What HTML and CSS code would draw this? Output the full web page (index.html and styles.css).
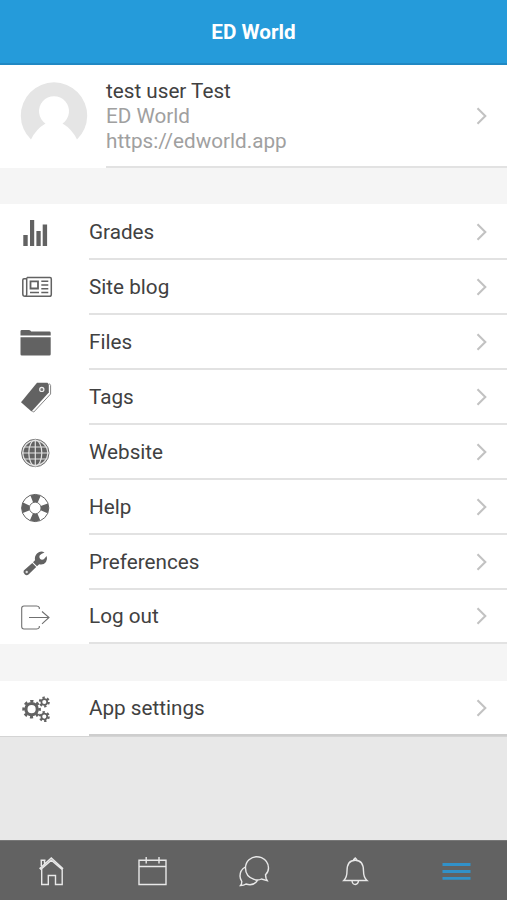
FILE: index.html
```html
<!DOCTYPE html>
<html lang="en">
<head>
<meta charset="utf-8">
<title>ED World</title>
<link rel="stylesheet" href="styles.css">
</head>
<body>
<svg class="defs" width="0" height="0" aria-hidden="true">
  <symbol id="chevron" viewBox="0 0 12 20"><path d="M1.500 2.300L9.300 10L1.500 17.700" fill="none" stroke="#c2c2c2" stroke-width="2.100"/></symbol>
</svg>
<div class="screen">
  <header class="header"><h1>ED World</h1></header>
  <main class="content">
    <section class="profile">
      <svg class="avatar" viewBox="0 0 106 103">
        <path d="M31 74.500A33.200 33.200 0 1 1 77 74.500Q72 64 62.500 58.500A15 15 0 1 0 45.500 58.500Q36 64 31 74.500Z" fill="#e5e5e5"/>
      </svg>
      <div class="profile-body">
        <div class="profile-text">
          <p class="name">test user Test</p>
          <p>ED World</p>
          <p>https://edworld.app</p>
        </div>
        <svg class="chevron"><use href="#chevron"/></svg>
      </div>
    </section>
    <nav class="list">
      <a class="row">
        <svg class="icon" viewBox="0 0 60 55"><path d="M23.300 30h4.400v11h-4.400zM30 15h4.200v26h-4.200zM36.400 26h4.300v15h-4.300zM42.700 19.500h4.400v21.500h-4.400z"/></svg>
        <div class="label"><span>Grades</span><svg class="chevron"><use href="#chevron"/></svg></div>
      </a>
      <a class="row">
        <svg class="icon" viewBox="0 0 60 55"><g fill="none" stroke="#626262" stroke-width="1.500"><path d="M27 17.500H50Q51.300 17.500 51.300 19V34.500Q51.300 36.300 49.500 36.300H25Q22.800 36.300 22.800 34V20Q22.800 18.800 24 18.800H26.500M26.700 17.500V34.500Q26.700 36 25 36.200"/><path d="M30.500 21.300h7.500v7.200h-7.500z" stroke-width="1.800"/><path d="M30 32.500h9M41.300 21.200h7M41.300 25h7M41.300 28.800h7M41.300 32.500h7"/></g></svg>
        <div class="label"><span>Site blog</span><svg class="chevron"><use href="#chevron"/></svg></div>
      </a>
      <a class="row">
        <svg class="icon" viewBox="0 0 60 55"><path d="M20.500 20.500V16.300Q20.500 15 21.800 15H29Q30.500 15 31.200 16.600H49.500Q50.700 16.600 50.700 17.800V20.500zM20.500 22.300H50.700V39.300Q50.700 40.500 49.500 40.500H21.800Q20.500 40.500 20.500 39.300z"/></svg>
        <div class="label"><span>Files</span><svg class="chevron"><use href="#chevron"/></svg></div>
      </a>
      <a class="row">
        <svg class="icon" viewBox="0 0 60 55"><path d="M37 12.800H47.500L48.800 14.500V22.500L31.500 41.500L21 32.300z"/><path d="M49.300 13.500L50.600 15.500V24L33.800 42L32.300 41.500" fill="none" stroke="#777" stroke-width=".9"/><circle cx="41.800" cy="19.400" r="2.100" fill="#777" stroke="#eee" stroke-width="1.200"/></svg>
        <div class="label"><span>Tags</span><svg class="chevron"><use href="#chevron"/></svg></div>
      </a>
      <a class="row">
        <svg class="icon" viewBox="0 0 60 55"><circle cx="35.300" cy="28" r="13.700" fill="#e2e2e2" stroke="#6a6a6a" stroke-width="1"/><circle cx="35.300" cy="28" r="11.800"/><g fill="none" stroke="#e2e2e2" stroke-width="1.200"><path d="M22 28h27M24 22h22.600M24 34h22.600M35.300 15v26"/><ellipse cx="35.300" cy="28" rx="6.500" ry="13"/></g></svg>
        <div class="label"><span>Website</span><svg class="chevron"><use href="#chevron"/></svg></div>
      </a>
      <a class="row">
        <svg class="icon" viewBox="0 0 60 55"><circle cx="35.200" cy="28" r="9.600" fill="none" stroke="#626262" stroke-width="7.500" stroke-dasharray="7.540 7.540" stroke-dashoffset="3.770"/><circle cx="35.200" cy="28" r="13.600" fill="none" stroke="#626262" stroke-width="1"/><circle cx="35.200" cy="28" r="5.800" fill="#fff" stroke="#626262" stroke-width=".9"/></svg>
        <div class="label"><span>Help</span><svg class="chevron"><use href="#chevron"/></svg></div>
      </a>
      <a class="row">
        <svg class="icon" viewBox="0 0 60 55"><path d="M23.800 35.500L32.300 28L36.200 32L28.500 39.500Q26.500 41 24.700 39.200Q22.700 37.300 23.800 35.500z"/><path d="M44.500 17.400Q40.500 15.300 37 18.400Q34.300 21 35 25.300L33 27.300L37 31.300L39.200 29.300Q43.500 30.300 46 27Q47.700 24.600 46.700 21L43.800 24.300Q41.500 25.300 40 23.700Q38.700 22 39.800 20.200Q41.500 18.500 44.500 17.400z"/><circle cx="26.700" cy="37" r="1.200" fill="#ddd"/></svg>
        <div class="label"><span>Preferences</span><svg class="chevron"><use href="#chevron"/></svg></div>
      </a>
      <a class="row last">
        <svg class="icon" viewBox="0 0 60 55"><g fill="none" stroke="#707070" stroke-width="1.100"><path d="M39.300 19V17.500Q38.500 16 36.500 16H24Q21.700 16 21.700 18.300V36.500Q21.700 39 24 39H36.500Q38.500 39 39.300 37.500V36M29 27.500H49M42 21.500L49 27.500L42 33.800"/></g></svg>
        <div class="label"><span>Log out</span><svg class="chevron"><use href="#chevron"/></svg></div>
      </a>
    </nav>
    <nav class="list settings">
      <a class="row">
        <svg class="icon" viewBox="0 0 60 55"><g fill="none" stroke="#626262"><circle cx="31.600" cy="27.200" r="5.700" stroke-width="3.200"/><circle cx="31.600" cy="27.200" r="8" stroke-width="2.600" stroke-dasharray="3.140 3.140" stroke-dashoffset="1.570"/><circle cx="44.300" cy="20" r="2.900" stroke-width="1.700"/><circle cx="44.300" cy="20" r="4.400" stroke-width="2.200" stroke-dasharray="2.300 2.300"/><circle cx="44.300" cy="34.600" r="2.900" stroke-width="1.700"/><circle cx="44.300" cy="34.600" r="4.400" stroke-width="2.200" stroke-dasharray="2.300 2.300"/></g></svg>
        <div class="label"><span>App settings</span><svg class="chevron"><use href="#chevron"/></svg></div>
      </a>
    </nav>
  </main>
  <footer class="tabs">
    <svg viewBox="0 0 40 60"><path d="M9 28.300L20.300 18L31.600 28.300L30.800 29.300L20.300 20.300L10 29.300zM10.300 26V20.300H13.500V23.500M9.500 20.300H14.500M10.700 28.500V44.500H17.300V35.500H24.500V44.500H31.200V28.500"/></svg>
    <svg viewBox="0 0 40 60"><path d="M7 20.300H34V44.500H7zM7 26.500H34M14.200 17V23.500M27 17V23.500"/></svg>
    <svg viewBox="0 0 40 60"><path d="M33 38.200L34.300 40.700L28.500 39Q25 40.800 21 39.400Q12.500 36.500 12.500 28Q12.500 23 16 19.800Q21.500 15 28.500 17.700Q35.500 21 35.500 28Q35.500 32 32.500 34.700zM12.300 27Q7 30 7 36Q7 38.500 8.800 41.500Q8.800 44 7.500 45.500Q11 45.500 13 44Q20.500 46.500 24.500 40.300"/></svg>
    <svg viewBox="0 0 40 60"><path d="M8.800 40.500Q12 37.500 12 31Q12 20.300 20.200 20.300Q28.500 20.300 28.500 31Q28.500 37.500 32 40.500zM18.200 20L20.200 18L22.200 20M17 41Q17.500 44.500 20.300 44.500Q23 44.500 23.500 41"/></svg>
    <svg class="active" viewBox="0 0 40 60"><path d="M6.500 24.500H34.500M6.500 31.500H34.500M6.500 38.300H34.500"/></svg>
  </footer>
</div>
</body>
</html>
```
FILE: styles.css
```css
* { box-sizing: border-box; }
body, h1, p { margin: 0; }
body {
  background: #e8e8e8;
  color: #414141;
  font-family: Roboto, "Liberation Sans", sans-serif;
  font-size: 20.700px;
}
.defs { display: none; }
.screen {
  display: flex;
  flex-direction: column;
  height: 900px;
}
.header {
  display: flex;
  align-items: center;
  justify-content: center;
  height: 65px;
  background: #259bda;
  border-bottom: 2px solid #2088c3;
  color: #fff;
}
.header h1 {
  padding-top: 1px;
  font-size: 20.700px;
  font-weight: 700;
}
.content { flex: 1; }
.profile {
  display: flex;
  height: 103px;
  background: #fff;
}
.avatar {
  width: 106px;
  height: 103px;
}
.profile-body, .label {
  display: flex;
  flex: 1;
  align-items: center;
  justify-content: space-between;
  padding-right: 19px;
  border-bottom: 2px solid #e2e2e2;
}
.profile-text {
  padding-top: 2px;
  color: #a0a0a0;
  line-height: 25.300px;
}
.profile-text .name { color: #414141; }
.chevron {
  width: 12px;
  height: 20px;
}
.list {
  margin-top: 36px;
  padding-top: 1px;
  background: #fff;
  box-shadow: 0 -36px #f5f5f5;
}
.row {
  display: flex;
  height: 55px;
}
.row.last { height: 54px; }
.icon {
  width: 60px;
  height: 55px;
  margin-right: 29px;
  fill: #626262;
}
.settings {
  margin-top: 37px;
  box-shadow: 0 -37px #f5f5f5;
  border-bottom: 1px solid #d4d4d4;
}
.settings .row { height: 54px; }
.settings .label { border-color: #cecece; }
.tabs {
  display: grid;
  grid-template-columns: repeat(5, 1fr);
  justify-items: center;
  height: 60px;
  background: #626262;
  box-shadow: inset 0 1px #777;
}
.tabs svg {
  width: 40px;
  height: 60px;
  fill: none;
  stroke: #e8e8e8;
  stroke-width: 1.400;
}
.tabs .active {
  stroke: #3191c8;
  stroke-width: 2.800;
}
```
